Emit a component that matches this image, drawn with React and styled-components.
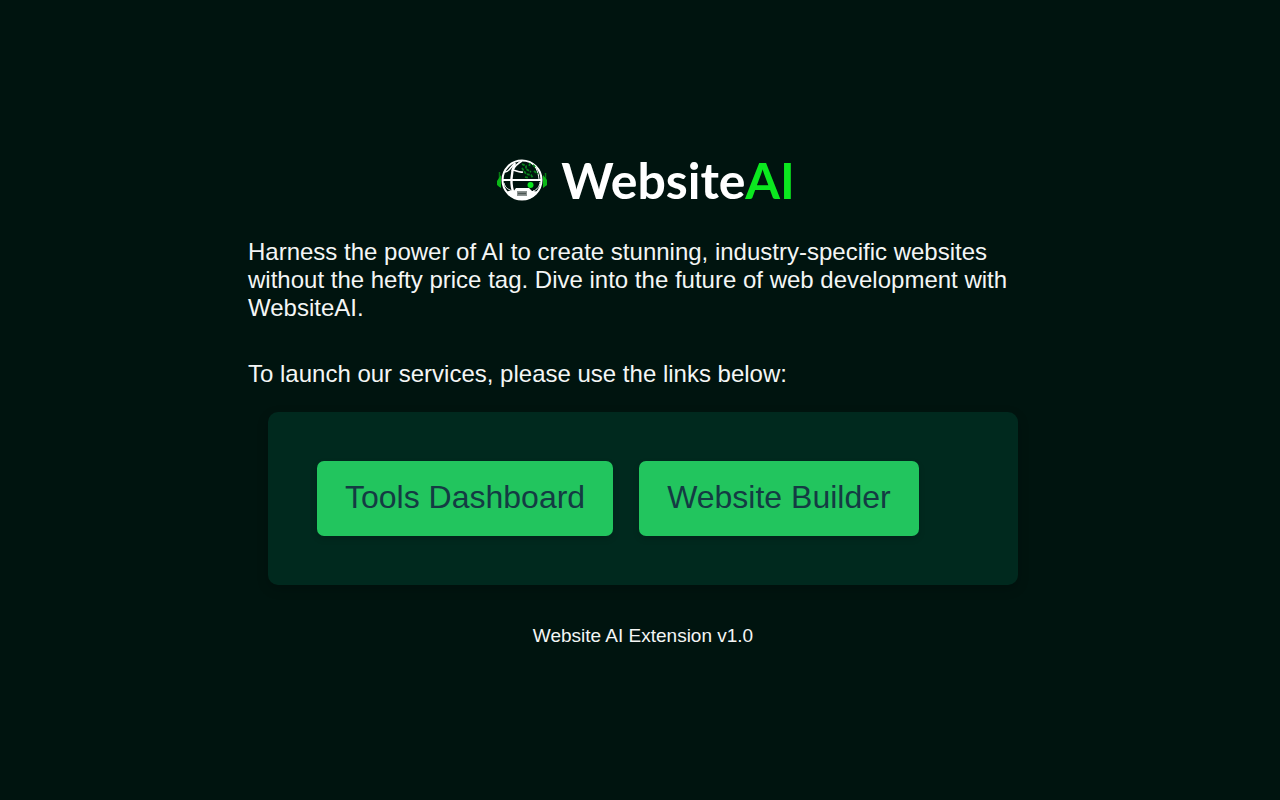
import styled, { createGlobalStyle } from 'styled-components';

const GlobalStyle = createGlobalStyle`
  body {
    margin: 0;
    background: #00140f;
    color: #f4f6f5;
    font-family: 'Liberation Sans', Arial, sans-serif;
  }
`;

const Page = styled.main`
  box-sizing: border-box;
  min-height: 100vh;
  padding: 20px 20px 24px 26px;
  display: flex;
  flex-direction: column;
  align-items: center;
  justify-content: center;
`;

const Content = styled.div`
  width: 100%;
  max-width: 790px;
  display: flex;
  flex-direction: column;
`;

const Logo = styled.h1`
  margin: 0 0 28px;
  padding-left: 6px;
  display: flex;
  align-items: center;
  justify-content: center;
  gap: 12px;
  font-family: Lato, sans-serif;
  font-size: 50px;
  font-weight: 700;
  line-height: 60px;
  color: #ffffff;
`;

const LogoAccent = styled.span`
  color: #0be81f;
`;

const Intro = styled.p`
  margin: 0 0 38px;
  font-size: 24px;
  line-height: 28px;
`;

const Lead = styled.p`
  margin: 0 0 24px;
  font-size: 24px;
  line-height: 28px;
`;

const Panel = styled.nav`
  margin: 0 20px 40px;
  padding: 49px;
  display: flex;
  flex-wrap: wrap;
  gap: 26px;
  border-radius: 10px;
  background: #00291e;
  box-shadow: 0 4px 12px rgba(0, 0, 0, 0.2);
`;

const LaunchLink = styled.a`
  padding: 18px 28px 21px;
  border-radius: 7px;
  background: #22c55e;
  box-shadow: 0 3px 6px rgba(0, 0, 0, 0.15);
  color: #143b43;
  font-size: 32px;
  line-height: 36px;
  text-decoration: none;
`;

const Version = styled.footer`
  font-size: 19px;
  line-height: 22px;
  text-align: center;
`;

const links = [
  { label: 'Tools Dashboard', href: '#tools' },
  { label: 'Website Builder', href: '#builder' },
];

function GlobeIcon() {
  return (
    <svg width="52" height="44" viewBox="0 0 52 44" fill="none" aria-hidden="true">
      {/* headphones */}
      <path d="M2.5 14v15M48.5 15v13" stroke="#067a12" strokeWidth="1.5" />
      <path d="M4 17v13l-4-3v-4zM46 17v13l4-3v-5z" fill="#0bb817" />
      <circle cx="25" cy="22" r="19.5" stroke="#fff" strokeWidth="2" />
      {/* grid lines */}
      <path d="M6 22h39" stroke="#fff" strokeWidth="2" />
      <path d="M18 5c-4 9-5 22-1 31" stroke="#fff" strokeWidth="2.4" />
      <path
        d="M8 14c4 0 6-5 9-8M15 13c3-5 6-8 10-10M15 12c4 0 6 3 11 2"
        stroke="#fff"
        strokeWidth="1.6"
      />
      <path d="M33 4c6 4 8 9 9 17M7 25c1 5 5 7 9 8M43 24c0 4-3 8-7 9" stroke="#fff" strokeWidth="1" />
      {/* circuit */}
      <path
        d="M25 6l4 2v3l5 3M33 5l-1 4M25 10l4 6 5 1 2 3M36 7l3 3M28 19l4 1M37 13l4 3"
        stroke="#08831c"
        strokeWidth="1.8"
        strokeDasharray="3 1"
      />
      <circle cx="33.5" cy="27" r="3" fill="#0be81f" />
      <path
        d="M10 34c3-2 5-1 6 0l3-4h13l3 3c2 0 4 0 6 1-4 5-9 8-16 8s-12-3-15-8z"
        fill="#fff"
      />
      <path d="M20 33h10v5H20z" fill="#8b9290" />
      <path d="M21 35.5h8" stroke="#4c5754" strokeWidth="1.5" />
    </svg>
  );
}

function App() {
  return (
    <>
      <GlobalStyle />
      <Page>
        <Content>
          <Logo>
            <GlobeIcon />
            <span>
              Website<LogoAccent>AI</LogoAccent>
            </span>
          </Logo>
          <Intro>
            Harness the power of AI to create stunning, industry-specific websites without the
            hefty price tag. Dive into the future of web development with WebsiteAI.
          </Intro>
          <Lead>To launch our services, please use the links below:</Lead>
          <Panel>
            {links.map((link) => (
              <LaunchLink key={link.label} href={link.href}>
                {link.label}
              </LaunchLink>
            ))}
          </Panel>
          <Version>Website AI Extension v1.0</Version>
        </Content>
      </Page>
    </>
  );
}

export default App;
